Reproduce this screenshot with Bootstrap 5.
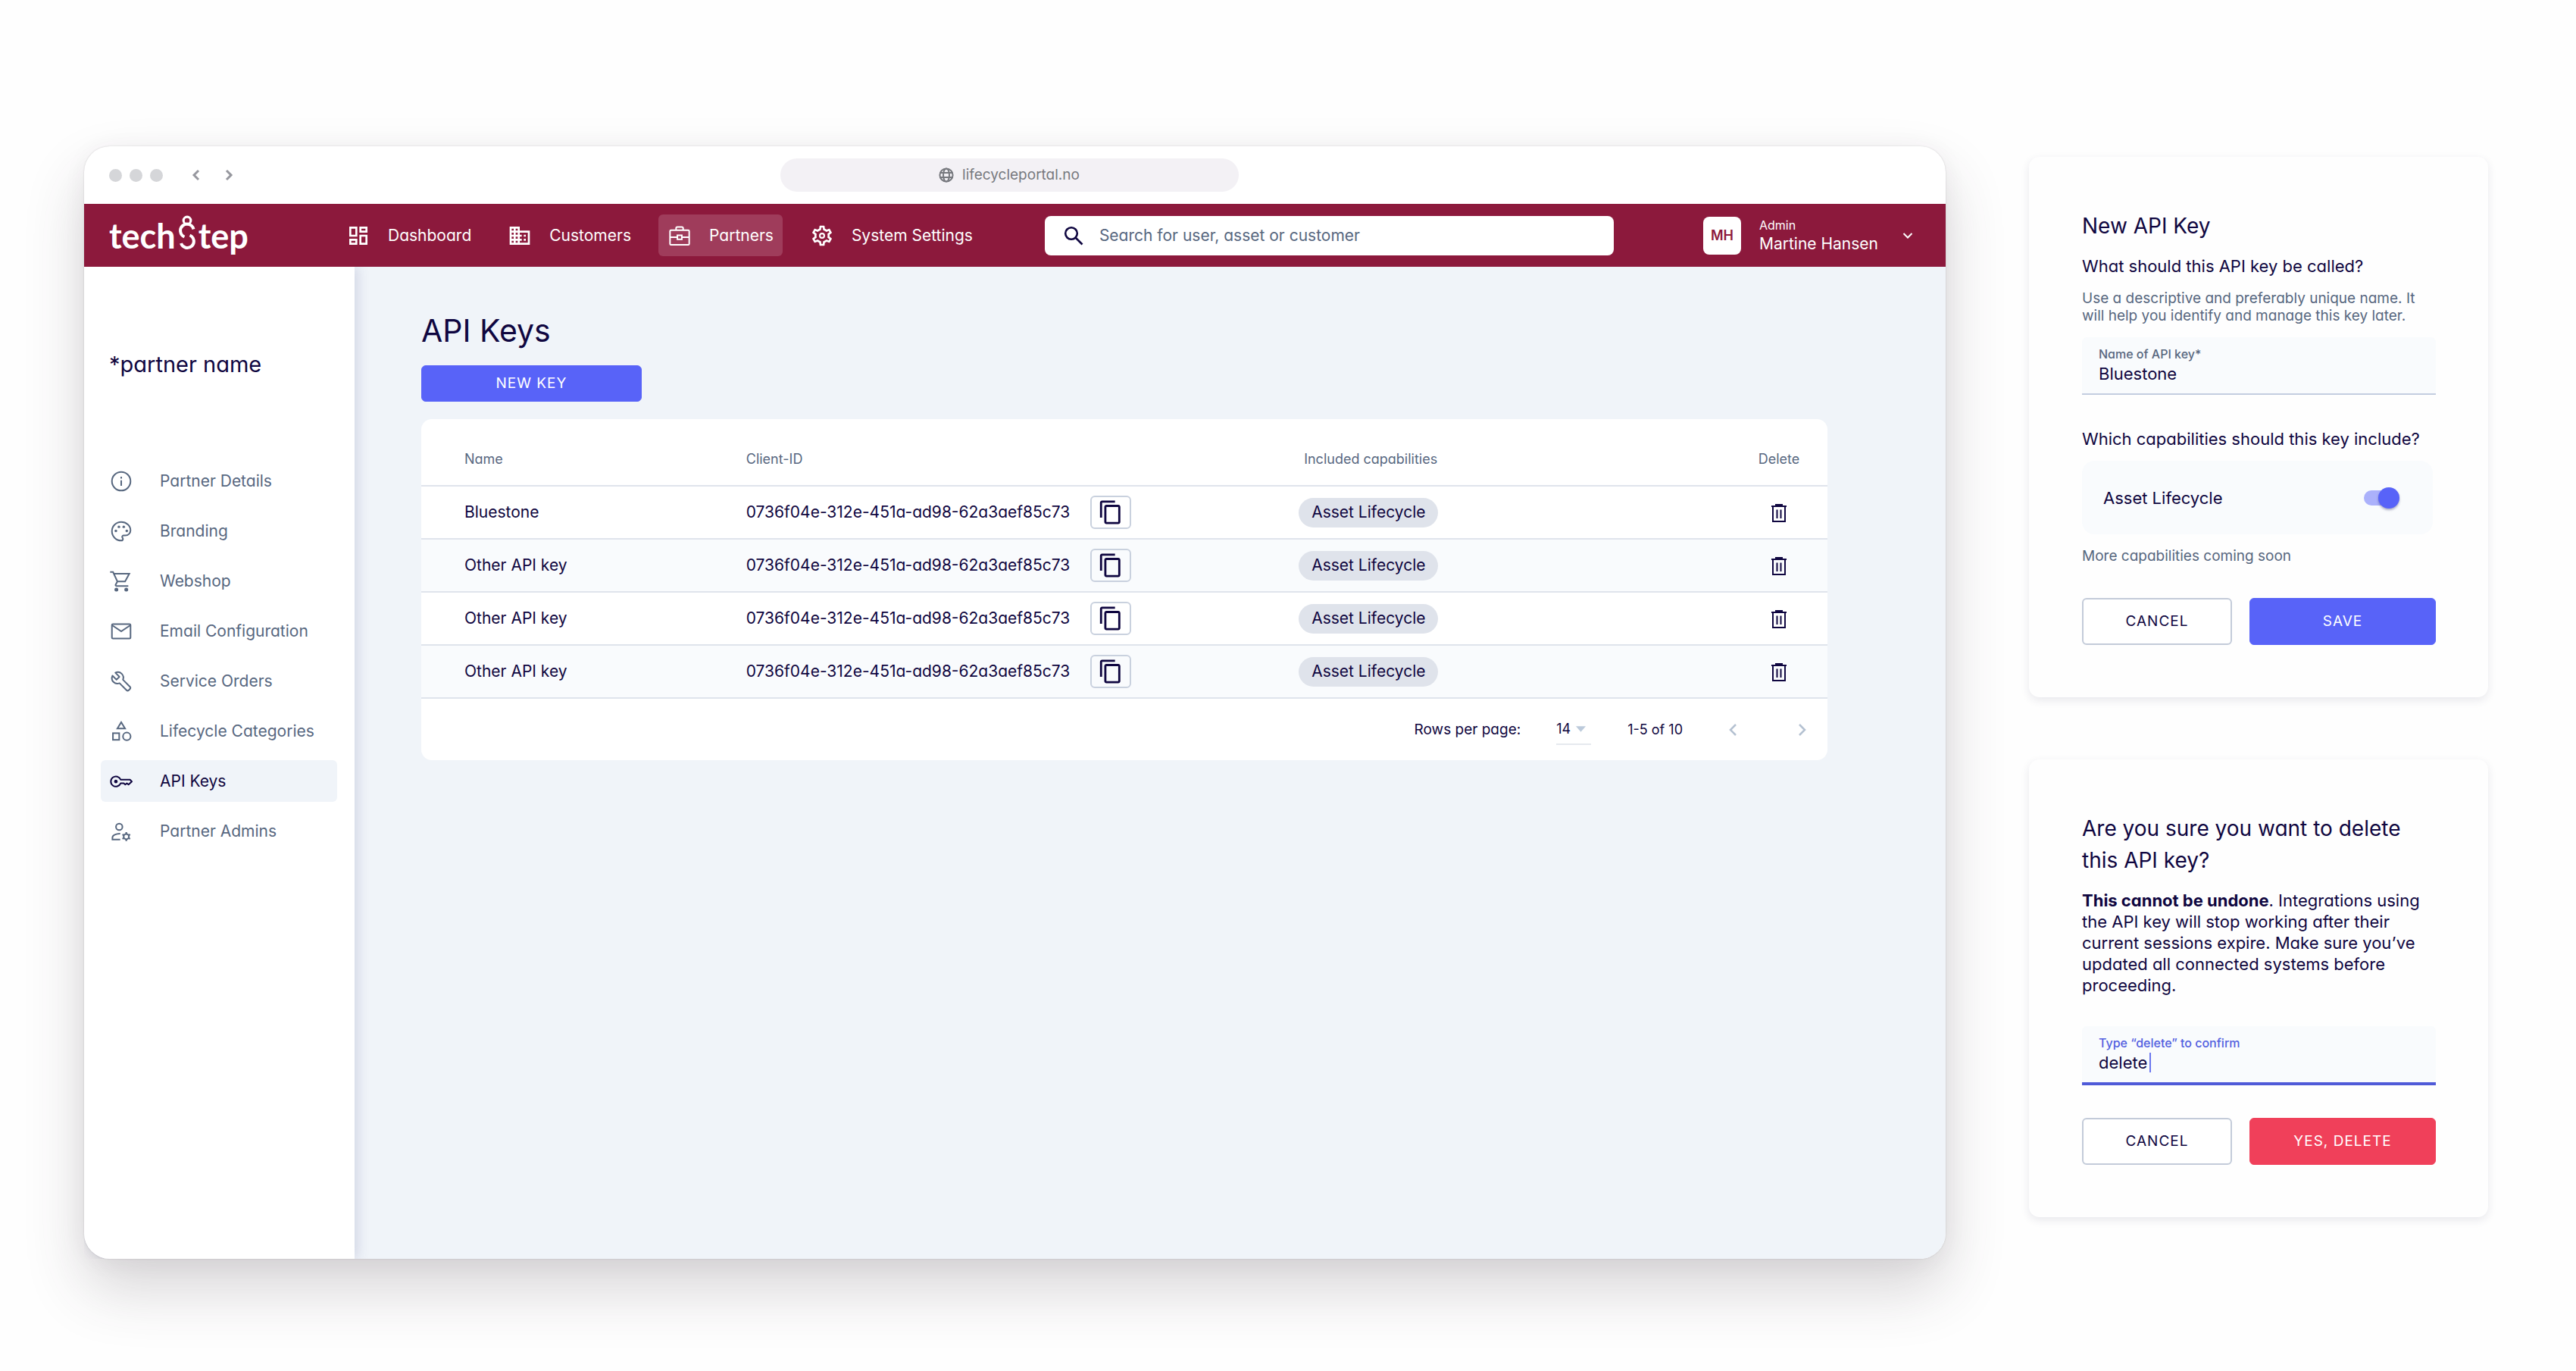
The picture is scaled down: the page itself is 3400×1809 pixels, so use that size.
<!DOCTYPE html>
<html lang="en">
<head>
<meta charset="utf-8">
<meta name="viewport" content="width=device-width, initial-scale=1">
<title>API Keys</title>
<link rel="stylesheet" href="https://cdn.jsdelivr.net/npm/bootstrap@5.3.0/dist/css/bootstrap.min.css">
<style>
  :root { --ink: #0f0640; --slate: #57677f; --line: #dfe4ec; --blue: #5863f8; --wine: #8c193c; --mist: #f0f4f9; --faint: #f9fbfd; }
  body { font-family: Inter, "Open Sans", sans-serif; font-feature-settings: "cv11"; font-size: 21px; line-height: 28px; color: var(--ink); background: #fefefe; }
  svg { display: block; flex: none; }
  .ico { width: 32px; height: 32px; fill: currentColor; }
  .ico-line { fill: none; stroke: currentColor; stroke-width: 1.5; }
  .stage { padding: 193px 116px 148px 111px; gap: 110px; }

  .app-window { min-width: 0; border-radius: 34px; background: #fff; box-shadow: 0 0 2px rgba(40,30,40,.2), 0 40px 80px rgba(60,50,60,.2), 0 4px 30px rgba(60,50,60,.06); }
  .chrome-bar { height: 76px; padding: 0 48px 0 33px; color: #96979e; }
  .chrome-dots { gap: 10px; }
  .chrome-dot { width: 17px; height: 17px; border-radius: 50%; background: #d5d6d9; }
  .chrome-side { flex: 1 1 0; }
  .address { width: 605px; height: 44px; border-radius: 22px; background: #f3f1f5; color: #77797e; font-size: 19px; gap: 11px; }

  .top-nav { height: 83px; padding: 0 43px 0 33px; background: var(--wine); color: #fff; }
  .brand { width: 301px; font-family: Lato, sans-serif; font-size: 45px; line-height: 56px; color: #fff; text-decoration: none; font-weight: 700; gap: 4px; }
  .top-links { gap: 24px; }
  .top-link { height: 55px; padding: 0 12px; gap: 23px; border-radius: 6px; color: #fff; text-decoration: none; white-space: nowrap; }
  .top-link.active { background: #9f3c5b; }
  .search-box { margin: 0 118px 0 83px; height: 52px; padding: 0 24px; gap: 20px; border-radius: 8px; background: #fff; color: var(--ink); }
  .search-box input { color: var(--slate); }
  .search-box input::placeholder { color: var(--slate); opacity: 1; }
  .plain-input { border: 0; background: transparent; padding: 0; outline: 0; min-width: 0; font: inherit; color: var(--ink); }
  .avatar { width: 50px; height: 50px; border-radius: 8px; background: #fff; color: var(--wine); font-size: 18px; font-weight: 600; }
  .user-menu { border: 0; background: transparent; color: #fff; padding: 0; gap: 24px; text-align: left; }
  .user-role { font-size: 16px; line-height: 22px; }

  .side-nav { width: 357px; padding: 111px 23px 40px 22px; border-bottom-left-radius: 34px; background: #fff; box-shadow: 4px 0 16px rgba(70,80,140,.18); position: relative; clip-path: inset(0 -30px 0 0); }
  .partner { font-size: 29px; line-height: 36px; padding-left: 11px; margin-bottom: 108px; }
  .side-list { gap: 11px; }
  .side-link { height: 55px; padding: 0 11px; gap: 35px; border-radius: 6px; color: var(--slate); text-decoration: none; white-space: nowrap; }
  .side-link.active { background: var(--mist); color: var(--ink); }

  .content { padding: 54px 156px 60px 88px; background: var(--mist); border-bottom-right-radius: 34px; min-width: 0; }
  .page-title { font-size: 41px; line-height: 60px; font-weight: 400; margin-bottom: 16px; }
  .btn-portal { --bs-btn-font-size: 19px; --bs-btn-line-height: 28px; --bs-btn-border-radius: 6px; --bs-btn-padding-y: 9px; letter-spacing: 1px; }
  .btn-blue { --bs-btn-bg: #5863f8; --bs-btn-border-color: #5863f8; --bs-btn-color: #fff; }
  .btn-red { --bs-btn-bg: #f0405a; --bs-btn-border-color: #f0405a; --bs-btn-color: #fff; }
  .btn-ghost { --bs-btn-bg: #fff; --bs-btn-border-color: #c3cbd9; --bs-btn-color: #0f0640; }
  .btn-new { width: 291px; margin-bottom: 23px; }
  .key-card { border: 0; border-radius: 14px; overflow: hidden; }
  .key-table { table-layout: fixed; margin: 0; --bs-table-color: #0f0640; }
  .key-table th { height: 88px; padding: 18px 0 0; font-size: 18px; font-weight: 400; color: var(--slate); border-bottom: 2px solid var(--line); vertical-align: middle; }
  .key-table td { height: 70px; padding: 0; border-bottom: 2px solid var(--line); }
  .key-table tbody tr:nth-child(even) td { background: var(--faint); }
  .key-table .col-name { width: 23.1%; padding-left: 57px; }
  .key-table .col-id { width: 39.3%; }
  .key-table .col-del { width: 128px; text-align: center; }
  .key-table th.col-cap { padding-left: 7px; }
  .id-cell { gap: 27px; }
  .copy-btn { width: 54px; height: 44px; border: 2px solid #c9d1de; border-radius: 6px; background: transparent; color: var(--ink); padding: 0; }
  .bare-btn { border: 0; background: transparent; color: var(--ink); padding: 0; vertical-align: middle; }
  .chip { height: 39px; padding: 0 17px; border-radius: 20px; background: #dfe3eb; }
  .pager { height: 81px; padding: 0 26px; font-size: 19px; }
  .rows-select { width: 46px; margin: 0 48px 0 47px; padding: 5px 0; border: 0; border-bottom: 2px solid #e6e9ee; appearance: none; color: var(--ink); font-size: 18px; background: url("data:image/svg+xml,%3Csvg xmlns='http://www.w3.org/2000/svg' viewBox='0 0 14 8'%3E%3Cpath fill='%23bccadb' d='M0 0h14L7 8z'/%3E%3C/svg%3E") no-repeat 26px 15px / 13px 8px; }
  .pager-steps { gap: 77px; margin-left: 60px; }
  .pager .bare-btn { color: #b4c1d1; }
  .range { font-size: 18px; }

  .dialogs { width: 606px; flex: none; padding-top: 14px; gap: 82px; }
  .dialog-card { border: 0; border-radius: 14px; padding: 70px 69px 69px 70px; background: #fefefe; box-shadow: 0 4px 12px rgba(40,40,80,.1); }
  .dialog-title { font-size: 28px; line-height: 42px; font-weight: 400; margin: 0 0 18px; }
  .question { font-size: 22px; line-height: 28px; font-weight: 400; margin: 0; }
  .question-next { margin: 44px 0 15px; }
  .warning { font-size: 22px; line-height: 28px; margin: 0 0 40px; }
  .hint { font-size: 19px; line-height: 23px; color: var(--slate); margin: 17px 0; }
  .field { background: var(--faint); border-bottom: 2px solid #c3cde0; padding: 12px 22px 8px; height: 76px; border-radius: 6px 6px 0 0; font-size: 22px; }
  .field label { font-size: 16px; line-height: 20px; font-weight: 500; color: var(--slate); display: block; margin-bottom: 2px; }
  .field.focused { border-bottom: 4px solid #4f5ad8; height: 78px; }
  .field.focused label { color: #5260e0; }
  .confirm-input { width: 67px; }
  .text-caret { width: 2px; height: 26px; background: #6b77f0; }
  .switch-box { height: 97px; padding: 0 44px 0 28px; border-radius: 16px; background: var(--faint); margin-right: 4px; font-size: 22px; }
  .switch { appearance: none; width: 47px; height: 28px; margin: 0; position: relative; }
  .switch::before { content: ""; position: absolute; inset: 4px 8px 4px 0; border-radius: 10px; background: #abb1fb; }
  .switch::after { content: ""; position: absolute; top: 0; right: 0; width: 28px; height: 28px; border-radius: 50%; background: var(--blue); box-shadow: 0 2px 3px rgba(30,30,90,.35); }
  .actions { gap: 23px; margin-top: 43px; }
  .hint + .actions { margin-top: 27px; }
  .actions .btn { --bs-btn-padding-y: 16px; }
  .actions .btn-ghost { flex: 0 0 198px; --bs-btn-border-width: 2px; --bs-btn-padding-y: 15px; }
</style>
</head>
<body>
<div class="stage d-flex min-vh-100">

  <main class="app-window flex-grow-1 d-flex flex-column">
    <div class="chrome-bar d-flex align-items-center">
      <div class="chrome-side d-flex align-items-center">
        <div class="chrome-dots d-flex"><span class="chrome-dot"></span><span class="chrome-dot"></span><span class="chrome-dot"></span></div>
        <svg class="ms-4 me-4" width="34" height="20" viewBox="0 0 34 20" fill="none" stroke="currentColor" stroke-width="3"><path d="M23 4l-6 6 6 6"/></svg>
        <svg width="12" height="20" viewBox="0 0 12 20" fill="none" stroke="currentColor" stroke-width="3"><path d="M2 4l6 6-6 6"/></svg>
      </div>
      <div class="address d-flex align-items-center justify-content-center">
        <svg width="20" height="20" viewBox="0 0 20 20" fill="none" stroke="currentColor" stroke-width="2"><circle cx="10" cy="10" r="8.6"/><ellipse cx="10" cy="10" rx="4" ry="8.6"/><path d="M1.5 7h17M1.5 13h17"/></svg>
        <span>lifecycleportal.no</span>
      </div>
      <div class="chrome-side"></div>
    </div>

    <header class="top-nav d-flex align-items-center">
      <a class="brand d-flex" href="#" aria-label="techstep"><span>tech</span>
        <svg width="22" height="48" viewBox="0 -2 22 48" fill="none" stroke="#fff" stroke-width="4"><circle cx="11" cy="6" r="4.800" stroke-width="3.200"/><path d="M19.500 17.500A8.800 8.800 0 1 0 7.500 27.500M14.500 25.500A8.600 8.600 0 1 1 3 36"/></svg>
        <span>tep</span></a>
      <nav class="top-links d-flex">
        <a class="top-link d-flex align-items-center" href="#"><svg class="ico" viewBox="0 0 24 24"><path d="M19 5v2h-4V5h4M9 5v6H5V5h4m10 8v6h-4v-6h4M9 17v2H5v-2h4M21 3h-8v6h8V3zM11 3H3v10h8V3zm10 8h-8v10h8V11zm-10 4H3v6h8v-6z"/></svg>Dashboard</a>
        <a class="top-link d-flex align-items-center" href="#"><svg class="ico" viewBox="0 0 24 24"><path fill-rule="evenodd" d="M12 7V3H2v18h20V7H12zM6 19H4v-2h2v2zm0-4H4v-2h2v2zm0-4H4V9h2v2zm0-4H4V5h2v2zm4 12H8v-2h2v2zm0-4H8v-2h2v2zm0-4H8V9h2v2zm0-4H8V5h2v2zm10 12h-8v-2h2v-2h-2v-2h2v-2h-2V9h8v10zm-2-8h-2v2h2v-2zm0 4h-2v2h2v-2z"/></svg>Customers</a>
        <a class="top-link active d-flex align-items-center" href="#"><svg class="ico ico-line" viewBox="0 0 24 24"><rect x="2.5" y="6.5" width="19" height="14.5" rx="1"/><path d="M8.500 6.500V4.500a1.200 1.200 0 0 1 1.200-1.200h4.600a1.200 1.200 0 0 1 1.200 1.200v2M2.500 13.500h7.300M14.200 13.500h7.300"/><rect x="9.800" y="11.600" width="4.400" height="4"/></svg>Partners</a>
        <a class="top-link d-flex align-items-center" href="#"><svg class="ico" viewBox="0 0 24 24"><path fill-rule="evenodd" d="M19.430 12.980c.04-.32.07-.64.07-.98 0-.34-.03-.66-.07-.98l2.110-1.650c.19-.15.24-.42.12-.64l-2-3.460c-.09-.16-.26-.25-.44-.25-.06 0-.12.01-.17.03l-2.490 1c-.52-.4-1.080-.73-1.690-.98l-.38-2.650C14.460 2.180 14.250 2 14 2h-4c-.25 0-.46.18-.49.42l-.38 2.650c-.61.25-1.170.59-1.690.98l-2.490-1c-.06-.02-.12-.03-.18-.03-.17 0-.34.09-.43.25l-2 3.460c-.13.22-.07.49.12.64l2.110 1.650c-.04.32-.07.65-.07.98 0 .33.03.66.07.98l-2.110 1.650c-.19.15-.24.42-.12.64l2 3.460c.09.16.26.25.44.25.06 0 .12-.01.17-.03l2.490-1c.52.4 1.080.73 1.690.98l.38 2.650c.03.24.24.42.49.42h4c.25 0 .46-.18.49-.42l.38-2.650c.61-.25 1.170-.59 1.690-.98l2.490 1c.06.02.12.03.18.03.17 0 .34-.09.43-.25l2-3.460c.12-.22.07-.49-.12-.64l-2.110-1.650zm-1.980-1.710c.04.31.05.52.05.73 0 .21-.02.43-.05.73l-.14 1.130.89.7 1.080.84-.7 1.210-1.270-.51-1.040-.42-.9.68c-.43.32-.84.56-1.250.73l-1.060.43-.16 1.130-.2 1.350h-1.400l-.19-1.350-.16-1.130-1.060-.43c-.43-.18-.83-.41-1.230-.71l-.91-.7-1.060.43-1.270.51-.7-1.210 1.080-.84.89-.7-.14-1.130c-.03-.31-.05-.54-.05-.74s.02-.43.05-.73l.14-1.130-.89-.7-1.080-.84.7-1.210 1.270.51 1.040.42.9-.68c.43-.32.84-.56 1.250-.73l1.060-.43.16-1.130.2-1.350h1.390l.19 1.350.16 1.130 1.060.43c.43.18.83.41 1.230.71l.91.7 1.060-.43 1.270-.51.7 1.210-1.070.85-.89.7.14 1.130z"/><circle cx="12" cy="12" r="2.200" fill="none" stroke="currentColor" stroke-width="1.600"/></svg>System Settings</a>
      </nav>
      <label class="search-box flex-grow-1 d-flex align-items-center">
        <svg width="28" height="28" viewBox="0 0 28 28" fill="none" stroke="currentColor" stroke-width="2.600"><circle cx="11" cy="11" r="7.800"/><path d="M16.500 16.500l9 9"/></svg>
        <input class="plain-input flex-grow-1" type="search" aria-label="Search" placeholder="Search for user, asset or customer">
      </label>
      <button class="user-menu d-flex align-items-center" type="button">
        <span class="avatar d-flex align-items-center justify-content-center">MH</span>
        <span class="d-flex flex-column"><span class="user-role">Admin</span><span>Martine Hansen</span></span>
        <svg class="ms-2" width="14" height="12" viewBox="0 0 14 12" fill="none" stroke="#fff" stroke-width="2"><path d="M1.500 3l5.500 5.500L12.500 3"/></svg>
      </button>
    </header>

    <div class="d-flex flex-grow-1">
      <aside class="side-nav flex-shrink-0">
        <div class="partner">*partner name</div>
        <nav class="side-list d-flex flex-column">
          <a class="side-link d-flex align-items-center" href="#"><svg class="ico ico-line" viewBox="0 0 24 24"><circle cx="12" cy="12" r="9.200"/><path d="M12 11v5.500M12 7.500v1.800"/></svg>Partner Details</a>
          <a class="side-link d-flex align-items-center" href="#"><svg class="ico ico-line" viewBox="0 0 24 24"><path d="M12 21.200a9.200 9.200 0 0 1 0-18.400c5.100 0 9.200 3.700 9.200 8.200 0 2.900-2.300 5.200-5.200 5.200h-1.800a1.300 1.300 0 0 0-1 2.100c.3.4.5.8.5 1.300 0 .9-.7 1.600-1.700 1.600z"/><g fill="currentColor" stroke="none"><circle cx="6.700" cy="11.600" r="1.300"/><circle cx="9.700" cy="7.600" r="1.300"/><circle cx="14.500" cy="7.600" r="1.300"/><circle cx="17.500" cy="11.600" r="1.300"/></g></svg>Branding</a>
          <a class="side-link d-flex align-items-center" href="#"><svg class="ico ico-line" viewBox="0 0 24 24"><path d="M1 2.800h2.900l4.300 9.400h7.600l4.200-7.700H4.800M8.200 12.200l-1.700 3.100c-.3.600 0 1.300.8 1.300H19"/><g fill="currentColor" stroke="none"><circle cx="7.200" cy="20.300" r="1.900"/><circle cx="17" cy="20.300" r="1.900"/></g></svg>Webshop</a>
          <a class="side-link d-flex align-items-center" href="#"><svg class="ico ico-line" viewBox="0 0 24 24"><rect x="2.800" y="4.800" width="18.400" height="14.400" rx="1"/><path d="M3 6l9 6 9-6"/></svg>Email Configuration</a>
          <a class="side-link d-flex align-items-center" href="#"><svg class="ico ico-line" viewBox="0 0 24 24"><path stroke-linejoin="round" d="M6.200 3.500l4 4-2.900 2.900-4-4c-1 2.300-.5 4.700 1 6.200 1.700 1.700 4 2.100 6 1.200l7 7c.6.6 1.500.6 2.100 0l1.300-1.300c.6-.6.6-1.500 0-2.100l-7-7c.8-2 .4-4.300-1.300-6-1.700-1.700-4.200-1.900-6.200-.9z"/></svg>Service Orders</a>
          <a class="side-link d-flex align-items-center" href="#"><svg class="ico ico-line" viewBox="0 0 24 24"><path d="M12 3l3.800 6.200H8.200z"/><rect x="3.800" y="13.800" width="6.200" height="6.600"/><circle cx="17.500" cy="17" r="3.800"/></svg>Lifecycle Categories</a>
          <a class="side-link active d-flex align-items-center" href="#"><svg class="ico ico-line" viewBox="0 0 24 24" stroke-linejoin="round"><path d="M11.400 10.300a5 5 0 1 0 0 3.600h3.100l1.500 1.300 1.600-1.300 1.600 1.300 3.300-3-1.800-1.900z"/><circle cx="6.700" cy="12.100" r="1.700" fill="currentColor" stroke="none"/></svg>API Keys</a>
          <a class="side-link d-flex align-items-center" href="#"><svg class="ico ico-line" viewBox="0 0 24 24"><circle cx="10" cy="7.500" r="3.200"/><path d="M11 20H3.300v-1.800c0-2.300 3.700-4 7.700-3.900"/><circle cx="17" cy="17.200" r="2.600"/><path stroke-width="1.700" d="M17 12.800v1.800M17 19.800v1.800M13.200 15l1.600.9M19.200 18.500l1.600.9M13.200 19.400l1.600-.9M19.200 15.900l1.600-.9"/></svg>Partner Admins</a>
        </nav>
      </aside>

      <section class="content flex-grow-1">
        <h1 class="page-title">API Keys</h1>
        <button class="btn btn-portal btn-blue btn-new" type="button">NEW KEY</button>
        <div class="card key-card">
          <table class="table key-table align-middle">
            <thead><tr><th class="col-name">Name</th><th class="col-id">Client-ID</th><th class="col-cap">Included capabilities</th><th class="col-del">Delete</th></tr></thead>
            <tbody id="key-rows"></tbody>
          </table>
          <div class="pager d-flex align-items-center justify-content-end">
            <label for="rows">Rows per page:</label>
            <select class="rows-select" id="rows"><option>14</option></select>
            <span class="range">1-5 of 10</span>
            <div class="pager-steps d-flex">
              <button class="bare-btn" type="button" aria-label="Previous page"><svg width="14" height="20" viewBox="0 0 14 20" fill="none" stroke="currentColor" stroke-width="2.500"><path d="M10 3l-7 7 7 7"/></svg></button>
              <button class="bare-btn" type="button" aria-label="Next page"><svg width="14" height="20" viewBox="0 0 14 20" fill="none" stroke="currentColor" stroke-width="2.500"><path d="M3 3l7 7-7 7"/></svg></button>
            </div>
          </div>
        </div>
      </section>
    </div>
  </main>

  <div class="dialogs d-flex flex-column">
    <form class="card dialog-card">
      <h2 class="dialog-title">New API Key</h2>
      <h3 class="question">What should this API key be called?</h3>
      <p class="hint">Use a descriptive and preferably unique name. It will help you identify and manage this key later.</p>
      <div class="field"><label for="keyname">Name of API key*</label><input class="plain-input w-100 d-block" id="keyname" value="Bluestone"></div>
      <h3 class="question question-next">Which capabilities should this key include?</h3>
      <div class="switch-box d-flex align-items-center justify-content-between"><label for="asset">Asset Lifecycle</label><input class="switch" type="checkbox" role="switch" id="asset" checked></div>
      <p class="hint">More capabilities coming soon</p>
      <div class="actions d-flex"><button class="btn btn-portal btn-ghost" type="button">CANCEL</button><button class="btn btn-portal btn-blue flex-grow-1" type="button">SAVE</button></div>
    </form>

    <form class="card dialog-card">
      <h2 class="dialog-title">Are you sure you want to delete this API key?</h2>
      <p class="warning"><strong>This cannot be undone</strong>. Integrations using the API key will stop working after their current sessions expire. Make sure you’ve updated all connected systems before proceeding.</p>
      <div class="field focused"><label for="confirm">Type “delete” to confirm</label><div class="d-flex align-items-center"><input class="plain-input confirm-input" id="confirm" value="delete"><span class="text-caret"></span></div></div>
      <div class="actions d-flex"><button class="btn btn-portal btn-ghost" type="button">CANCEL</button><button class="btn btn-portal btn-red flex-grow-1" type="button">YES, DELETE</button></div>
    </form>
  </div>
</div>

<script src="https://cdn.jsdelivr.net/npm/bootstrap@5.3.0/dist/js/bootstrap.bundle.min.js"></script>
<script>
  const names = ["Bluestone", "Other API key", "Other API key", "Other API key"];
  document.getElementById("key-rows").innerHTML = names.map(name => `
    <tr>
      <td class="col-name">${name}</td>
      <td class="col-id"><div class="id-cell d-flex align-items-center"><span>0736f04e-312e-451a-ad98-62a3aef85c73</span>
        <button class="copy-btn d-flex align-items-center justify-content-center" type="button" aria-label="Copy"><svg width="34" height="34" viewBox="0 0 24 24" fill="currentColor"><path d="M16 1H4c-1.100 0-2 .9-2 2v14h2V3h12V1zm3 4H8c-1.100 0-2 .9-2 2v14c0 1.100.9 2 2 2h11c1.100 0 2-.9 2-2V7c0-1.100-.9-2-2-2zm0 16H8V7h11v14z"/></svg></button></div></td>
      <td class="col-cap"><span class="chip d-inline-flex align-items-center">Asset Lifecycle</span></td>
      <td class="col-del"><button class="bare-btn" type="button" aria-label="Delete"><svg width="22" height="26" viewBox="0 0 22 26" fill="none" stroke="currentColor" stroke-width="2"><path d="M1 4h20M7 4V2h8v2M3 4v20h16V4M8.500 8.500v11.500M13.500 8.500v11.500"/></svg></button></td>
    </tr>`).join("");
</script>
</body>
</html>
